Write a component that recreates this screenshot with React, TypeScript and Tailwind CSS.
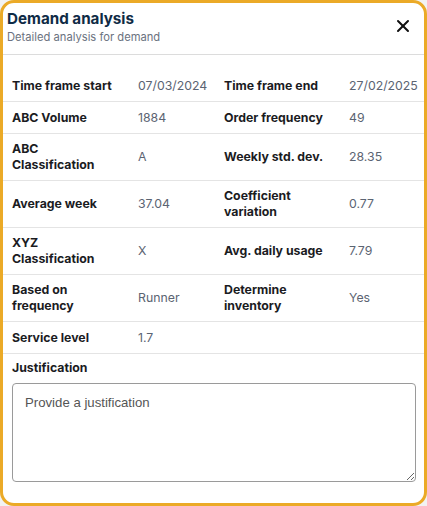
import React from 'react';
import { X } from 'lucide-react';

type Row = {
  cells: [string, string, string, string];
  tall?: boolean;
};

const rows: Row[] = [
  { cells: ['Time frame start', '07/03/2024', 'Time frame end', '27/02/2025'] },
  { cells: ['ABC Volume', '1884', 'Order frequency', '49'] },
  { cells: ['ABC\nClassification', 'A', 'Weekly std. dev.', '28.35'], tall: true },
  { cells: ['Average week', '37.04', 'Coefficient\nvariation', '0.77'], tall: true },
  { cells: ['XYZ\nClassification', 'X', 'Avg. daily usage', '7.79'], tall: true },
  { cells: ['Based on\nfrequency', 'Runner', 'Determine\ninventory', 'Yes'], tall: true },
  { cells: ['Service level', '1.7', '', ''] },
];

export default function App() {
  return (
    <div className="w-[427px] h-[506px] bg-[#f2f2f2]" style={{ fontFamily: 'Inter, "Noto Sans", sans-serif' }}>
      <div className="w-full h-full bg-white border-[3px] border-[#ebaa27] rounded-[14px] overflow-hidden flex flex-col">
        {/* Header */}
        <div className="flex items-center justify-between pl-[4px] pr-[11px] pt-[6px] pb-[9px] border-b border-[#dcdcdc]">
          <div>
            <h2 className="text-[15.2px] leading-[20px] font-bold text-[#0f2b46]">Demand analysis</h2>
            <p className="text-[11.2px] leading-[16px] text-[#6b7280]">Detailed analysis for demand</p>
          </div>
          <button className="text-[#111] mt-[-2px]">
            <X size={20} strokeWidth={2.4} />
          </button>
        </div>

        {/* Stats */}
        <div className="pt-[15px]">
          {rows.map((row, i) => (
            <div
              key={i}
              className={`grid grid-cols-[135px_86px_125px_1fr] items-center border-b border-[#e4e4e4] ${
                row.tall ? 'h-[47px]' : 'h-[32px]'
              }`}
            >
              <div className="pl-[9px] pr-2 whitespace-pre-line text-[12.3px] leading-[16px] font-bold text-[#1b1c1f]">{row.cells[0]}</div>
              <div className="text-[12.3px] leading-[16px] text-[#5b6472]">{row.cells[1]}</div>
              <div className="pr-2 whitespace-pre-line text-[12.3px] leading-[16px] font-bold text-[#1b1c1f]">{row.cells[2]}</div>
              <div className="text-[12.3px] leading-[16px] text-[#5b6472]">{row.cells[3]}</div>
            </div>
          ))}
        </div>

        {/* Justification */}
        <div className="px-[9px] pt-[6px]">
          <label className="block text-[12.3px] leading-[16px] font-bold text-[#1b1c1f]">Justification</label>
          <textarea
            placeholder="Provide a justification"
            className="mt-[7px] block w-[404px] h-[99px] border border-[#9a9a9a] rounded-[4px] px-[12px] pt-[10px] pb-[10px] text-[13.2px] leading-[18px] text-[#333] placeholder:text-[#555] outline-none"
            style={{ fontFamily: '"Liberation Sans", Arial, sans-serif' }}
          />
        </div>
      </div>
    </div>
  );
}
